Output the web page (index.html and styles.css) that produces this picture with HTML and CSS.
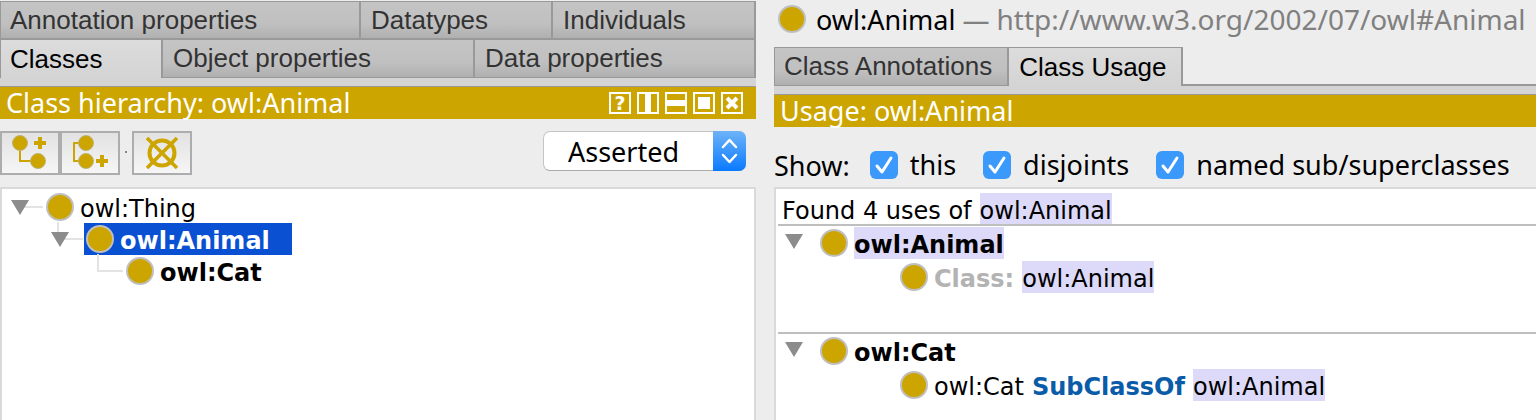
FILE: index.html
```html
<!DOCTYPE html>
<html lang="en">
<head>
<meta charset="utf-8">
<title>owl:Animal</title>
<link rel="stylesheet" href="styles.css">
</head>
<body>
<svg class="defs" aria-hidden="true">
  <symbol id="class-dot" viewBox="0 0 32 32"><circle cx="16" cy="16" r="13" fill="#cda500" stroke="#bfbfbf" stroke-width="2"/></symbol>
  <symbol id="twisty" viewBox="0 0 18 16"><path d="M0 0h18L9 15z" fill="#8c8c8c"/></symbol>
</svg>
<main class="workspace">
  <section class="pane">
    <div class="tabs" role="tablist">
      <div class="tab-row tab-row-top">
        <button class="tab" role="tab">Annotation properties</button>
        <button class="tab" role="tab">Datatypes</button>
        <button class="tab" role="tab">Individuals</button>
      </div>
      <div class="tab-row tab-row-bottom">
        <button class="tab active" role="tab" aria-selected="true">Classes</button>
        <button class="tab" role="tab">Object properties</button>
        <button class="tab" role="tab">Data properties</button>
      </div>
    </div>
    <div class="strip"></div>
    <header class="title-bar">
      <h2 class="title">Class hierarchy: owl:Animal</h2>
      <div class="window-buttons">
        <button class="window-button help" aria-label="Help">?</button>
        <button class="window-button" aria-label="Split vertically"><svg viewBox="0 0 22 22"><path d="M1 1h20v20H1z" fill="none" stroke="#fff" stroke-width="2"/><path d="M8 1h6v20H8z" fill="#fff"/></svg></button>
        <button class="window-button" aria-label="Split horizontally"><svg viewBox="0 0 22 22"><path d="M1 1h20v20H1z" fill="none" stroke="#fff" stroke-width="2"/><path d="M1 8h20v6H1z" fill="#fff"/></svg></button>
        <button class="window-button" aria-label="Float"><svg viewBox="0 0 22 22"><path d="M1 1h20v20H1z" fill="none" stroke="#fff" stroke-width="2"/><path d="M5 5h12v12H5z" fill="#fff"/></svg></button>
        <button class="window-button" aria-label="Close"><svg viewBox="0 0 22 22"><path d="M1 1h20v20H1z" fill="none" stroke="#fff" stroke-width="2"/><path d="M6 6l10 10M16 6L6 16" stroke="#fff" stroke-width="4" fill="none"/></svg></button>
      </div>
    </header>
    <div class="toolbar">
      <div class="button-group">
        <button class="tool" aria-label="Add subclass"><svg viewBox="0 0 56 40"><path d="M18 14v14h16" fill="none" stroke="#cda500" stroke-width="2"/><g fill="#cda500" stroke="#bfb277" stroke-width="1"><circle cx="18" cy="10" r="7.5"/><circle cx="36" cy="28" r="7.5"/></g><path d="M38 4v12M32 10h12" stroke="#cda500" stroke-width="4"/></svg></button>
        <button class="tool" aria-label="Add sibling class"><svg viewBox="0 0 56 40"><path d="M20 10h-8v18h8" fill="none" stroke="#cda500" stroke-width="2"/><g fill="#cda500" stroke="#bfb277" stroke-width="1"><circle cx="24" cy="10" r="7.5"/><circle cx="24" cy="28" r="7.5"/></g><path d="M40 22v12M34 28h12" stroke="#cda500" stroke-width="4"/></svg></button>
      </div>
      <span class="separator"></span>
      <button class="tool" aria-label="Delete class"><svg viewBox="0 0 56 40"><g fill="none" stroke="#cda500"><circle cx="28" cy="20" r="12.5" stroke-width="4"/><path d="M13 5l30 30M43 5L13 35" stroke-width="3.5"/></g></svg></button>
      <span class="select-box">
        <select class="mode" aria-label="Hierarchy mode"><option>Asserted</option><option>Inferred</option></select>
        <svg class="select-arrows" viewBox="0 0 33 40" aria-hidden="true"><path d="M10 16l6.500-7 6.500 7M10 24l6.500 7 6.500-7" fill="none" stroke="#fff" stroke-width="2.500" stroke-linecap="round" stroke-linejoin="round"/></svg>
      </span>
    </div>
    <ul class="panel tree" role="tree">
      <li class="tree-row" role="treeitem">
        <svg class="branch" width="42" height="32"><path d="M20 16h21" stroke="#e3e3e3" stroke-width="2"/><use href="#twisty" x="9" y="9" width="18" height="16"/></svg>
        <span class="node"><svg class="dot"><use href="#class-dot"/></svg><span class="label">owl:Thing</span></span>
      </li>
      <li class="tree-row" role="treeitem">
        <svg class="branch" width="82" height="32"><path d="M56 -1v10M60 16h21" stroke="#e3e3e3" stroke-width="2"/><use href="#twisty" x="49" y="9" width="18" height="16"/></svg>
        <span class="node selected"><svg class="dot"><use href="#class-dot"/></svg><span class="label strong">owl:Animal</span></span>
      </li>
      <li class="tree-row" role="treeitem">
        <svg class="branch" width="122" height="32"><path d="M96 -1v17h25" fill="none" stroke="#e3e3e3" stroke-width="2"/></svg>
        <span class="node"><svg class="dot"><use href="#class-dot"/></svg><span class="label strong">owl:Cat</span></span>
      </li>
    </ul>
  </section>

  <section class="pane">
    <h1 class="entity"><svg class="dot"><use href="#class-dot"/></svg><span class="entity-text">owl:Animal <span class="muted">—</span> <span class="muted iri">http://www.w3.org/2002/07/owl#Animal</span></span></h1>
    <div class="tab-row detail-tabs" role="tablist">
      <button class="tab" role="tab">Class Annotations</button>
      <button class="tab active" role="tab" aria-selected="true">Class Usage</button>
      <span class="tab-filler"></span>
    </div>
    <div class="strip"></div>
    <header class="title-bar"><h2 class="title">Usage: owl:Animal</h2></header>
    <div class="filters">
      <span class="filters-name">Show:</span>
      <label class="check"><input type="checkbox" checked>this</label>
      <label class="check"><input type="checkbox" checked>disjoints</label>
      <label class="check"><input type="checkbox" checked>named sub/superclasses</label>
    </div>
    <div class="panel usage">
      <p class="found"><span class="label">Found 4 uses of</span><span class="label hit">owl:Animal</span></p>
      <div class="group">
        <div class="usage-row"><svg class="twisty"><use href="#twisty"/></svg><svg class="dot"><use href="#class-dot"/></svg><span class="label strong hit">owl:Animal</span></div>
        <div class="usage-row child"><svg class="dot"><use href="#class-dot"/></svg><span class="label strong faded">Class:</span><span class="label hit">owl:Animal</span></div>
      </div>
      <div class="group">
        <div class="usage-row"><svg class="twisty"><use href="#twisty"/></svg><svg class="dot"><use href="#class-dot"/></svg><span class="label strong">owl:Cat</span></div>
        <div class="usage-row child"><svg class="dot"><use href="#class-dot"/></svg><span class="label">owl:Cat</span><span class="label strong keyword">SubClassOf</span><span class="label hit">owl:Animal</span></div>
      </div>
    </div>
  </section>
</main>
</body>
</html>
```

FILE: styles.css
```css
* { box-sizing: border-box; }

body {
  margin: 0;
  background: #ededed;
  color: #000;
  font-family: "Noto Sans", "Lucida Grande", sans-serif;
  font-size: 27px;
  overflow: hidden;
}

button, select, input { font: inherit; color: inherit; margin: 0; }
h1, h2, p, ul { margin: 0; padding: 0; font-size: inherit; font-weight: normal; }
ul { list-style: none; }
svg { display: block; flex: none; }
.defs { position: absolute; width: 0; height: 0; }

.workspace {
  display: grid;
  grid-template-columns: 756fr 762fr;
  column-gap: 18px;
  min-height: 100vh;
}
.pane { display: flex; flex-direction: column; min-width: 0; }

/* Tabs */
.tabs { padding-top: 1px; }
.tab-row { font-family: "Liberation Sans", Helvetica, sans-serif; font-size: 26px; }
.tab-row-top, .tab-row-bottom { display: grid; border-right: 2px solid #999; }
.tab-row-top { grid-template-columns: 359fr 192fr 203fr; }
.tab-row-bottom { grid-template-columns: 161fr 312fr 281fr; }
.tab {
  padding: 0 8px 0 10px;
  border: 0 solid #999;
  border-top-width: 1px;
  border-left-width: 2px;
  border-radius: 0;
  background: linear-gradient(#c4c4c4 0%, #c0c0c0 60%, #b0b0b0 100%);
  color: #333;
  line-height: 36px;
  text-align: left;
  white-space: nowrap;
}
.tab:first-child { border-left-width: 1px; padding-left: 9px; }
.tab-row-bottom .tab { border-top-width: 2px; border-bottom-width: 1px; line-height: 37px; }
.tab.active, .tab-row-bottom .tab.active {
  border-bottom-width: 0;
  background: linear-gradient(#dcdcdc, #d4d4d4);
  color: #000;
}
.detail-tabs { display: flex; }
.detail-tabs .tab { flex: none; border-bottom-width: 1px; padding-right: 15px; line-height: 37px; }
.detail-tabs .tab.active { padding-right: 14px; border-right-width: 2px; border-bottom-width: 0; }
.tab-filler { flex: 1; border-bottom: 2px solid #999; }
.strip { height: 9px; background: #d4d4d4; border-bottom: 1px solid #999; }

/* Gold header */
.title-bar {
  display: flex;
  align-items: center;
  justify-content: space-between;
  height: 32px;
  padding: 0 13px 0 6px;
  background: #cda500;
  color: #fff;
}
.title { line-height: 32px; white-space: nowrap; }
.window-buttons { display: flex; gap: 6px; }
.window-button { width: 22px; height: 22px; padding: 0; border: 0; background: none; }
.window-button.help {
  border: 2px solid #fff;
  font: bold 19px/18px "DejaVu Sans", sans-serif;
}

/* Toolbar */
.toolbar { display: flex; align-items: flex-start; height: 68px; padding: 12px 10px 0 0; }
.button-group { display: flex; }
.tool {
  width: 60px;
  height: 44px;
  padding: 0;
  border: 2px solid #adadad;
  background: linear-gradient(#e2e2e2, #f6f6f6);
}
.separator { width: 2px; height: 2px; margin: 20px 5px 0; background: #888; }
.select-box { position: relative; margin-left: auto; width: 203px; }
.mode {
  display: block;
  width: 100%;
  height: 40px;
  padding: 0 40px 0 24px;
  border: 1px solid #c4c4c4;
  border-bottom-color: #aaa;
  border-radius: 7px;
  background: #fff;
  appearance: none;
}
.select-arrows {
  position: absolute;
  top: 0;
  right: 0;
  width: 33px;
  height: 40px;
  border-radius: 0 7px 7px 0;
  background: linear-gradient(#6db3f8, #0a7aff);
  pointer-events: none;
}

/* Panels */
.panel { flex: 1; border: 2px solid #dadada; border-bottom: 0; background: #fff; font-family: "DejaVu Sans", Verdana, sans-serif; font-size: 24px; }
.label { padding-top: 4px; line-height: 28px; white-space: nowrap; }
.strong { font-weight: bold; }
.dot { width: 32px; height: 32px; }

.tree { padding-top: 2px; }
.tree-row, .node { display: flex; height: 32px; }
.branch { overflow: visible; }
.node { gap: 4px; }
.node.selected { padding-right: 22px; background: #0a50d2; color: #fff; }

/* Entity and filters */
.entity { display: flex; align-items: center; height: 47px; padding: 0 0 9px 2px; gap: 8px; }
.entity-text { line-height: 36px; white-space: nowrap; }
.muted { color: #808080; }
.iri { font-size: 28px; }
.filters { display: flex; align-items: center; height: 60px; padding-top: 16px; white-space: nowrap; }
.filters-name { margin-right: 20px; }
.check { display: flex; align-items: center; gap: 12px; margin-right: 27px; line-height: 34px; }
.check input {
  width: 28px;
  height: 28px;
  border-radius: 6px;
  appearance: none;
  background: #3b99fc url("data:image/svg+xml,%3Csvg xmlns='http://www.w3.org/2000/svg' viewBox='0 0 28 28'%3E%3Cpath d='M7 15l5 6L21 7' fill='none' stroke='white' stroke-width='3' stroke-linecap='round' stroke-linejoin='round'/%3E%3C/svg%3E");
}

/* Usage list */
.usage { padding: 4px 0 0 2px; border-right: 0; }
.found { display: flex; gap: 8px; height: 31px; padding-left: 4px; }
.group { min-height: 108px; padding-top: 1px; border-top: 2px solid #bfbfbf; }
.usage-row { display: flex; height: 32px; padding-left: 7px; }
.usage-row .dot { margin-right: 4px; }
.twisty { width: 18px; height: 16px; margin: 7px 15px 0 0; }
.child { margin-top: 2px; padding-left: 120px; }
.child .label + .label { margin-left: 8px; }
.hit { background: #dcdaf8; }
.faded { color: #b3b3b3; }
.keyword { color: #0a5ca8; }
```
